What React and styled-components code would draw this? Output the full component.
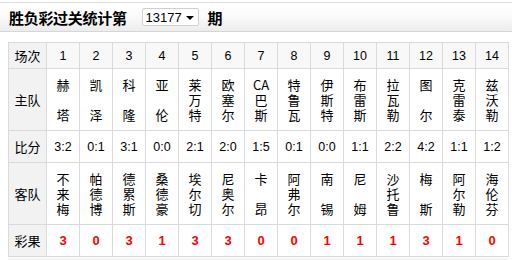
import styled, { createGlobalStyle } from "styled-components";

const GlobalStyle = createGlobalStyle`
  body {
    margin: 0;
    background: #fff;
    font-family: "Liberation Sans", "Noto Sans CJK SC", sans-serif;
    color: #000;
  }
`;

const Page = styled.div`
  padding-top: 2px;
`;

const Header = styled.div`
  height: 28px;
  display: flex;
  align-items: center;
  padding-left: 9px;
  border-top: 1px solid #dcdcdc;
  border-bottom: 1px solid #d6d6d6;
  background: linear-gradient(#ffffff 0%, #fbfbfb 45%, #ececec 100%);
`;

const Title = styled.h1`
  margin: 0;
  font-family: "Noto Sans CJK SC", sans-serif;
  font-size: 15px;
  font-weight: 700;
  letter-spacing: -0.3px;
`;

const Select = styled.div`
  margin-left: 15px;
  width: 52px;
  height: 16px;
  border: 1px solid #d0d0d0;
  border-radius: 2px;
  background: #fff;
  display: flex;
  align-items: center;
  padding-left: 3px;
  font-size: 13px;
  box-sizing: content-box;
`;

const Arrow = styled.span`
  margin-left: 4px;
  width: 0;
  height: 0;
  border-left: 4px solid transparent;
  border-right: 4px solid transparent;
  border-top: 4px solid #000;
  margin-top: 1px;
`;

const Term = styled.span`
  margin-left: 9px;
  font-family: "Noto Sans CJK SC", sans-serif;
  font-size: 15px;
  font-weight: 700;
`;

const Table = styled.table`
  margin: 10px 0 0 8px;
  border-collapse: collapse;
  table-layout: fixed;
  width: 500px;
  font-size: 12px;
`;

const Col = styled.col`
  width: ${(p) => (p.$first ? 38 : 33)}px;
`;

const Cell = styled.td`
  border: 1px solid #dadada;
  text-align: center;
  vertical-align: middle;
  padding: 0;
  height: ${(p) => p.$h}px;
  background: ${(p) => (p.$label ? "#f2f2f2" : p.$head ? "#f8f8f8" : "#fff")};
  font-family: ${(p) =>
    p.$label ? `"Noto Sans CJK SC", sans-serif` : `"Liberation Sans", "Noto Sans CJK SC", sans-serif`};
  font-size: ${(p) => (p.$label ? 13 : 12.5)}px;
`;

const Stack = styled.div`
  height: 45px;
  display: flex;
  flex-direction: column;
  justify-content: space-between;
  align-items: center;
  font-family: "Noto Sans CJK SC", sans-serif;
  font-size: 13px;
  line-height: 15px;
`;

const Result = styled.span`
  color: #ff0000;
  font-weight: 700;
  font-size: 13px;
`;

const Footer = styled.div`
  margin: 1px 0 0 8px;
  width: 500px;
  height: 10px;
  background: #f4f4f4;
`;

const home = ["赫塔", "凯泽", "科隆", "亚伦", "莱万特", "欧塞尔", ["CA", "巴", "斯"], "特鲁瓦", "伊斯特", "布雷斯", "拉瓦勒", "图尔", "克雷泰", "兹沃勒"];
const away = ["不来梅", "帕德博", "德累斯", "桑德豪", "埃尔切", "尼奥尔", "卡昂", "阿弗尔", "南锡", "尼姆", "沙托鲁", "梅斯", "阿尔勒", "海伦芬"];
const scores = ["3:2", "0:1", "3:1", "0:0", "2:1", "2:0", "1:5", "0:1", "0:0", "1:1", "2:2", "4:2", "1:1", "1:2"];
const results = [3, 0, 3, 1, 3, 3, 0, 0, 1, 1, 1, 3, 1, 0];

const Team = ({ name }) => {
  const parts = Array.isArray(name) ? name : name.split("");
  return (
    <Stack>
      {parts.map((c, i) => (
        <span key={i}>{c}</span>
      ))}
    </Stack>
  );
};

export default function App() {
  return (
    <Page>
      <GlobalStyle />
      <Header>
        <Title>胜负彩过关统计第</Title>
        <Select>
          13177
          <Arrow />
        </Select>
        <Term>期</Term>
      </Header>
      <Table>
        <colgroup>
          <Col $first />
          {scores.map((_, i) => (
            <Col key={i} />
          ))}
        </colgroup>
        <tbody>
          <tr>
            <Cell $label $h={25}>场次</Cell>
            {scores.map((_, i) => (
              <Cell key={i} $head $h={25}>{i + 1}</Cell>
            ))}
          </tr>
          <tr>
            <Cell $label $h={61}>主队</Cell>
            {home.map((n, i) => (
              <Cell key={i} $h={61}><Team name={n} /></Cell>
            ))}
          </tr>
          <tr>
            <Cell $label $h={31}>比分</Cell>
            {scores.map((s, i) => (
              <Cell key={i} $h={31}>{s}</Cell>
            ))}
          </tr>
          <tr>
            <Cell $label $h={61}>客队</Cell>
            {away.map((n, i) => (
              <Cell key={i} $h={61}><Team name={n} /></Cell>
            ))}
          </tr>
          <tr>
            <Cell $label $h={31}>彩果</Cell>
            {results.map((r, i) => (
              <Cell key={i} $h={31}><Result>{r}</Result></Cell>
            ))}
          </tr>
        </tbody>
      </Table>
      <Footer />
    </Page>
  );
}
